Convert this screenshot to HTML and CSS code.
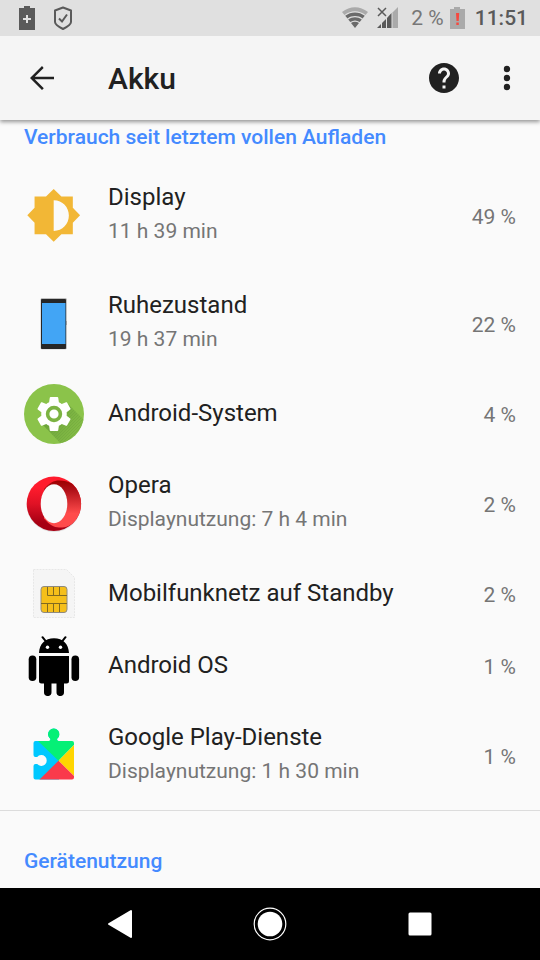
FILE: index.html
```html
<!DOCTYPE html>
<html lang="de">
<head>
<meta charset="utf-8">
<meta name="viewport" content="width=device-width, initial-scale=1">
<title>Akku</title>
<link rel="stylesheet" href="styles.css">
</head>
<body>
<div class="screen">
  <div class="status">
    <svg class="status-battery" width="16" height="24" viewBox="0 0 16 24" aria-hidden="true"><path fill="#5a5a5a" d="M0 2h5V0h6v2h5v22H0z"/><path stroke="#e0e0e0" stroke-width="2" d="M8 9v8M4 13h8"/></svg>
    <svg class="status-shield" width="18" height="24" viewBox="0 0 18 24" aria-hidden="true"><path fill="none" stroke="#5a5a5a" stroke-width="2" stroke-linejoin="round" d="M9 1.500L17 4.500V16c0 3-4 5-8 7-4-2-8-4-8-7V4.500z"/><path fill="none" stroke="#5a5a5a" stroke-width="2" d="M5 12.500l3 3 5-7"/></svg>
    <div class="status-right">
      <svg width="26" height="22" viewBox="0 0 26 22" aria-hidden="true"><path fill="#aaa" d="M0 5C8-1.500 18-1.500 26 5L23.500 8C17 3 9 3 2.500 8z"/><path fill="#6a6a6a" d="M3.200 8.800C9 4.300 17 4.300 22.800 8.800L20.500 11.500C16 8.300 10 8.300 5.500 11.500zM6.200 12.500C10.500 9.500 15.500 9.500 19.800 12.500L17.700 15C14.500 13 11.500 13 8.300 15zM9 16c2.500-1.700 5.500-1.700 8 0l-4 5z"/></svg>
      <svg class="status-signal" width="22" height="22" viewBox="0 0 22 22" aria-hidden="true"><path fill="#5a5a5a" d="M0 21L4 17v4zM5 16l4-4v9H5zM10 11l4.500-5v15H10z"/><path fill="#aaa" d="M15.500 5.500L21 0v21h-5.500z"/><path stroke="#5a5a5a" stroke-width="1.500" d="M1 1l8 8M9 1L1 9"/></svg>
      <span class="status-level">2 %</span>
      <svg width="15" height="22" viewBox="0 0 15 22" aria-hidden="true"><path fill="#aaa" d="M0 2h4V0h6v2h5v20H0z"/><path fill="#f5493f" d="M6 6h3.200l-.5 8H6.500zM6.300 15.500h2.500V18H6.300z"/></svg>
      <time class="status-time">11:51</time>
    </div>
  </div>

  <header class="toolbar">
    <button class="icon-button" type="button" aria-label="Zurück"><svg width="36" height="36" viewBox="0 0 24 24"><path fill="#212121" d="M20 11.200H7.200l5.900-5.900L12 4l-8 8 8 8 1.200-1.200-6-6H20z"/></svg></button>
    <h1 class="toolbar-title">Akku</h1>
    <button class="icon-button" type="button" aria-label="Hilfe"><svg width="36" height="36" viewBox="0 0 24 24"><path fill="#212121" d="M12 2C6.480 2 2 6.480 2 12s4.480 10 10 10 10-4.480 10-10S17.520 2 12 2zm1 17h-2v-2h2v2zm2.070-7.750l-.9.920C13.450 12.900 13 13.500 13 15h-2v-.5c0-1.100.45-2.100 1.170-2.830l1.240-1.260c.37-.36.59-.86.59-1.410 0-1.100-.9-2-2-2s-2 .9-2 2H8c0-2.210 1.790-4 4-4s4 1.790 4 4c0 .88-.36 1.680-.93 2.250z"/></svg></button>
    <button class="icon-button more-button" type="button" aria-label="Weitere Optionen"><svg width="36" height="36" viewBox="0 0 36 36"><g fill="#212121"><circle cx="18" cy="9" r="3.200"/><circle cx="18" cy="18" r="3.200"/><circle cx="18" cy="27" r="3.200"/></g></svg></button>
  </header>

  <main class="content">
    <h2 class="section-title">Verbrauch seit letztem vollen Aufladen</h2>
    <ul class="usage-list">
      <li class="row row-tall">
        <svg class="row-icon" viewBox="0 0 60 60" aria-hidden="true"><path fill="#f2b736" transform="translate(1.700 1.300) scale(2.333)" d="M20.200 15.200L23.310 12 20.200 8.800V3.900h-4.900L12 .69 8.700 3.900H3.800v4.900L.69 12l3.110 3.200v4.900h4.900L12 23.310l3.300-3.210h4.900zM12 18.700V5.500c3.860 0 6.500 3 6.500 6.600s-2.640 6.600-6.500 6.600z"/></svg>
        <div class="row-text"><span class="row-title">Display</span><span class="row-note">11 h 39 min</span></div>
        <span class="row-value">49 %</span>
      </li>
      <li class="row row-tall">
        <svg class="row-icon" viewBox="0 0 60 60" aria-hidden="true"><rect x="16.700" y="4.300" width="26" height="51" rx="1" fill="#aaa"/><rect x="17" y="5" width="25" height="50" rx="1" fill="#262626"/><rect x="18" y="9" width="23.500" height="41" fill="#42a5f5"/><path fill="#999" d="M42 27h1v4h-1z"/></svg>
        <div class="row-text"><span class="row-title">Ruhezustand</span><span class="row-note">19 h 37 min</span></div>
        <span class="row-value">22 %</span>
      </li>
      <li class="row">
        <svg class="row-icon" viewBox="0 0 60 60" aria-hidden="true"><defs><clipPath id="disc"><circle cx="30" cy="30" r="30"/></clipPath><pattern id="dots" width="3" height="3" patternUnits="userSpaceOnUse"><path fill="#689f38" d="M0 0h1v1H0zM2 1h1v1H2zM1 2h1v1H1z"/></pattern><linearGradient id="shade" x1="20" y1="30" x2="55" y2="48" gradientUnits="userSpaceOnUse"><stop stop-color="#689f38"/><stop offset="1" stop-color="#7cb342" stop-opacity=".5"/></linearGradient></defs><circle cx="30" cy="30" r="30" fill="#8bc34a"/><g clip-path="url(#disc)"><path fill="url(#shade)" d="M19 41L44 20 64 40V64H41z"/><path fill="url(#dots)" opacity=".35" d="M19 41L44 20 64 40V64H41z"/></g><path fill="#fff" transform="translate(9.600 9.600) scale(1.700)" d="M19.430 12.980c.04-.32.070-.64.070-.98s-.03-.66-.07-.98l2.110-1.650c.19-.15.240-.42.120-.64l-2-3.460c-.12-.22-.39-.3-.61-.22l-2.490 1c-.52-.4-1.080-.73-1.690-.98l-.38-2.650C14.460 2.180 14.250 2 14 2h-4c-.25 0-.46.180-.49.420l-.38 2.650c-.61.250-1.170.590-1.690.980l-2.490-1c-.23-.09-.49 0-.61.220l-2 3.460c-.13.220-.07.490.120.640l2.110 1.650c-.04.320-.07.650-.07.980s.03.660.070.980l-2.110 1.650c-.19.150-.24.420-.12.640l2 3.460c.12.220.39.300.61.220l2.490-1c.52.400 1.080.730 1.690.980l.38 2.650c.03.240.24.420.49.420h4c.25 0 .46-.18.490-.42l.38-2.650c.61-.25 1.170-.59 1.690-.98l2.490 1c.23.090.49 0 .61-.22l2-3.460c.12-.22.070-.49-.12-.64z"/><circle cx="30" cy="30" r="6.400" fill="none" stroke="#7cb342" stroke-width="3.600"/></svg>
        <div class="row-text"><span class="row-title">Android-System</span></div>
        <span class="row-value">4 %</span>
      </li>
      <li class="row row-tall">
        <svg class="row-icon" viewBox="0 0 60 60" aria-hidden="true"><defs><linearGradient id="opera-left" x1="0" y1="0" x2="0" y2="1"><stop offset=".2" stop-color="#ff1b2d"/><stop offset=".5" stop-color="#e01225"/><stop offset=".85" stop-color="#a70014"/></linearGradient><linearGradient id="opera-right" x1="0" y1="0" x2="0" y2="1"><stop stop-color="#9c0000"/><stop offset=".2" stop-color="#b01018"/><stop offset=".7" stop-color="#ff4b4b"/></linearGradient><mask id="ring"><path fill="#fff" d="M0 0h60v60H0z"/><ellipse cx="30" cy="29.800" rx="13.300" ry="19.500"/></mask></defs><circle cx="30" cy="30.800" r="27.200" fill="#c9c9c9" opacity=".5" mask="url(#ring)"/><g mask="url(#ring)"><circle cx="29.900" cy="29.800" r="27.200" fill="url(#opera-left)"/><path fill="url(#opera-right)" d="M20 15C25 9 30 6.500 35 6.500c5 0 9 1.200 13 3a27.200 27.200 0 0 1 0 40.600c-4 3-8 3.500-13 3.500-5 0-10-3-15-9z"/></g></svg>
        <div class="row-text"><span class="row-title">Opera</span><span class="row-note">Displaynutzung: 7 h 4 min</span></div>
        <span class="row-value">2 %</span>
      </li>
      <li class="row">
        <svg class="row-icon" viewBox="0 0 60 60" aria-hidden="true"><path fill="#f5f5f5" stroke="#e2e2e2" stroke-width=".8" stroke-dasharray="2 1" d="M9.500 5.500h33l8 8v40h-41z"/><rect x="17" y="22.500" width="26" height="26" rx="3" fill="#f5bf1a" stroke="#8e8a80"/><path fill="none" stroke="#806a20" stroke-width="1" d="M23.500 23v8.500H43M29.500 23v8.500M35.500 23v8.500M17 39.500h26M23.500 39.500V48M29.500 39.500V48M35.500 39.500V48"/></svg>
        <div class="row-text"><span class="row-title">Mobilfunknetz auf Standby</span></div>
        <span class="row-value">2 %</span>
      </li>
      <li class="row">
        <svg class="row-icon" viewBox="0 0 60 60" aria-hidden="true"><path d="M15 17C15.500 8 21 2.300 30 2.300S44.500 8 45 17zM15 20h30v25a2.500 2.500 0 0 1-2.500 2.500H40V56.300a3.700 3.700 0 0 1-7.500 0V47.500h-5V56.300a3.700 3.700 0 0 1-7.500 0V47.500h-2.500A2.500 2.500 0 0 1 15 45z"/><rect x="4.700" y="19.500" width="7.600" height="25.500" rx="3.800"/><rect x="47.500" y="19.500" width="7.600" height="25.500" rx="3.800"/><path stroke="#000" stroke-width="2" stroke-linecap="round" d="M18.500 1.200l4 5M41.500 1.200l-4 5"/><g fill="#fff"><circle cx="23.500" cy="11.300" r="1.700"/><circle cx="36.500" cy="11.300" r="1.700"/></g></svg>
        <div class="row-text"><span class="row-title">Android OS</span></div>
        <span class="row-value">1 %</span>
      </li>
      <li class="row row-tall">
        <svg class="row-icon" viewBox="0 0 60 60" aria-hidden="true"><defs><clipPath id="puzzle"><path d="M11.500 15H25q1.500 0 1.500-2A5.700 5.700 0 1 1 33 13q0 2 1.500 2H48a2 2 0 0 1 2 2V51.500a2 2 0 0 1-2 2H11.500a2 2 0 0 1-2-2V40a2 2 0 0 1 2-2H13.200A5.400 5.400 0 1 0 13.200 31H11.500a2 2 0 0 1-2-2V17a2 2 0 0 1 2-2z"/></clipPath></defs><g clip-path="url(#puzzle)"><path fill="#00c8ff" d="M0 0h35v60H0z"/><path fill="#05f076" d="M14 15V0h40v15L34.500 34.700z"/><path fill="#ffd500" d="M34.500 34.700L54 15v39z"/><path fill="#fa3a4b" d="M34.500 34.700L54 54v6H9z"/></g></svg>
        <div class="row-text"><span class="row-title">Google Play-Dienste</span><span class="row-note">Displaynutzung: 1 h 30 min</span></div>
        <span class="row-value">1 %</span>
      </li>
    </ul>
    <section class="device-usage"><h2 class="section-title">Gerätenutzung</h2></section>
  </main>

  <nav class="navbar" aria-label="System">
    <button class="nav-button" type="button" aria-label="Zurück"><svg width="36" height="36" viewBox="0 0 36 36"><path fill="#fff" stroke="#fff" stroke-width="2" stroke-linejoin="round" d="M7 18L29 5v26z"/></svg></button>
    <button class="nav-button" type="button" aria-label="Startseite"><svg width="36" height="36" viewBox="0 0 36 36"><circle cx="18" cy="18" r="15.800" fill="none" stroke="#fff" stroke-width="1.200"/><circle cx="18" cy="18" r="12.300" fill="#fff"/></svg></button>
    <button class="nav-button" type="button" aria-label="Letzte Apps"><svg width="36" height="36" viewBox="0 0 36 36"><rect x="6.500" y="6.500" width="23" height="23" rx="1.500" fill="#fff"/></svg></button>
  </nav>
</div>
</body>
</html>
```
FILE: styles.css
```css
* {
  box-sizing: border-box;
}

body {
  margin: 0;
  background: #fafafa;
  color: #212121;
  font-family: Roboto, "Noto Sans", sans-serif;
}

svg {
  display: block;
  flex: none;
}

button {
  display: flex;
  align-items: center;
  justify-content: center;
  padding: 0;
  border: 0;
  background: none;
  cursor: pointer;
}

h1,
h2,
ul {
  margin: 0;
  padding: 0;
}

.screen {
  display: flex;
  flex-direction: column;
  min-height: 100vh;
}

.status {
  display: flex;
  align-items: center;
  height: 36px;
  padding: 0 12px 0 19px;
  background: #e0e0e0;
}

.status-shield {
  margin-left: 19px;
}

.status-right {
  display: flex;
  align-items: center;
  margin-left: auto;
  color: #5a5a5a;
  font-size: 21px;
  line-height: 24px;
}

.status-signal {
  margin-left: 9px;
}

.status-level {
  margin: 0 6px 0 12px;
  color: #777;
}

.status-time {
  margin-left: 10px;
  font-weight: 500;
}

.toolbar {
  display: flex;
  align-items: center;
  height: 84px;
  padding: 0 15px 0 24px;
  background: #f5f5f5;
  box-shadow: 0 2px 4px rgba(0, 0, 0, 0.4);
  clip-path: inset(0 0 -8px 0);
  z-index: 1;
}

.icon-button {
  width: 36px;
  height: 48px;
}

.toolbar-title {
  flex: 1;
  margin-left: 48px;
  padding-top: 2px;
  font-size: 30px;
  font-weight: 500;
  line-height: 36px;
}

.more-button {
  margin-left: 27px;
}

.content {
  flex: 1;
}

.section-title {
  padding: 5px 24px 13px;
  color: #448aff;
  font-size: 21px;
  font-weight: 500;
  line-height: 24px;
}

.usage-list {
  list-style: none;
}

.row {
  display: flex;
  align-items: center;
  min-height: 72px;
  padding: 0 24px;
}

.row-tall {
  min-height: 108px;
}

.row-icon {
  width: 60px;
  height: 60px;
}

.row-text {
  display: flex;
  flex: 1;
  flex-direction: column;
  gap: 6px;
  margin-left: 24px;
  padding-bottom: 2px;
}

.row-title {
  font-size: 24px;
  line-height: 28px;
}

.row-note,
.row-value {
  color: #757575;
  font-size: 21px;
  line-height: 28px;
}

.row-note {
  margin-bottom: 2px;
}

.row-value {
  padding-top: 2px;
}

.device-usage {
  padding-top: 33px;
  border-top: 1px solid #dcdcdc;
}

.navbar {
  display: grid;
  grid-template-columns: repeat(3, 1fr);
  height: 72px;
  padding: 0 45px;
  background: #000;
}
```
